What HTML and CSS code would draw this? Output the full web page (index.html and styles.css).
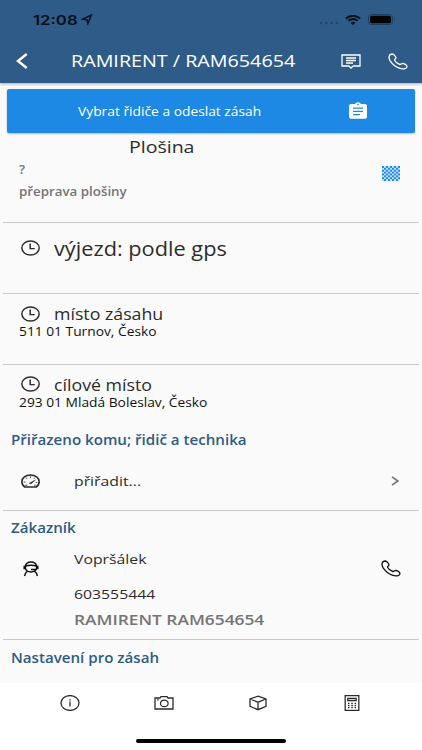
FILE: index.html
```html
<!DOCTYPE html>
<html lang="cs">
<head>
<meta charset="utf-8">
<meta name="viewport" content="width=device-width, initial-scale=1">
<title>RAMIRENT / RAM654654</title>
<link rel="stylesheet" href="styles.css">
</head>
<body>
<svg class="defs" width="0" height="0">
  <symbol id="clock" viewBox="0 0 18 16" preserveAspectRatio="none"><ellipse cx="9" cy="8" rx="8.2" ry="7"/><path d="M8.7 3.6V8.6H13"/></symbol>
  <symbol id="phone" viewBox="0 0 20 17" preserveAspectRatio="none"><path d="M1.1 3.4C1.5 2 3 1 4.3 1C5.8 1.1 7.9 3.8 8 4.8C8 6 6.2 6.2 6.6 7.3C7.3 8.8 10 11 11.8 11.5C13 11.7 13.2 10.4 14.6 10.3C16 10.4 18.8 12.1 19 13.3C19 14.5 17.5 15.8 16 15.9C9.5 16.3.2 9.2 1.1 3.4Z"/></symbol>
</svg>
<div class="screen">
  <header class="header">
    <div class="status">
      <span class="time">12:08</span>
      <svg class="location" viewBox="0 0 12 11"><path d="M1.2 5.3L10.4 1L6.8 9.8L6 5.9Z"/></svg>
      <svg class="signal" viewBox="0 0 20 4"><circle cx="2" cy="2" r="1.3"/><circle cx="7.3" cy="2" r="1.3"/><circle cx="12.6" cy="2" r="1.3"/><circle cx="17.9" cy="2" r="1.3"/></svg>
      <svg class="wifi" viewBox="0 0 16 10"><path d="M.8 3.5Q8-2 15.2 3.5M3.3 5.8Q8 2.1 12.7 5.8"/><path class="dot" d="M5.5 7.7Q8 5.9 10.5 7.7L8 9.9Z"/></svg>
      <svg class="battery" viewBox="0 0 28 11"><rect class="shell" x=".5" y=".5" width="24" height="10" rx="3"/><rect x="2" y="1.8" width="21" height="7.4" rx="1.8"/><path class="tip" d="M26 3.8Q28 5.5 26 7.2Z"/></svg>
    </div>
    <div class="toolbar">
      <svg class="back" viewBox="0 0 12 16"><path d="M10.7 1L2 8L10.7 15"/></svg>
      <h1 class="title"><span>RAMIRENT / RAM654654</span></h1>
      <svg class="chat" viewBox="0 0 20 15"><path d="M1 1H19V12H12.2L10 14L7.8 12H1ZM5 4H15M5 6.5H15M5 9H12"/></svg>
      <svg class="call"><use href="#phone"/></svg>
    </div>
  </header>
  <main class="content">
    <button class="send"><span class="send-label">Vybrat řidiče a odeslat zásah</span>
      <svg class="clipboard" viewBox="0 0 18 17"><path class="board" d="M2 2H6Q6.7.3 9 .3Q11.3.3 12 2H16Q18 2 18 3.8V15Q18 16.8 16 16.8H2Q0 16.8 0 15V3.8Q0 2 2 2Z"/><circle cx="9" cy="2.6" r=".8"/><path class="lines" d="M4 6.2H14M4 9.4H14M4 12.6H11"/></svg>
    </button>
    <section class="summary">
      <h2 class="kind"><span>Plošina</span></h2>
      <div class="detail">
        <div class="notes"><p><span>?</span></p><p><span>přeprava plošiny</span></p></div>
        <svg class="flag" viewBox="0 0 18 15"><defs><pattern id="checks" width="4" height="3.75" patternUnits="userSpaceOnUse"><path d="M0 0H2V1.875H0ZM2 1.875H4V3.75H2Z"/></pattern></defs><rect class="tint" width="18" height="15"/><rect fill="url(#checks)" width="18" height="15"/></svg>
      </div>
    </section>
    <section class="stop departure"><div class="stop-head"><svg class="clock"><use href="#clock"/></svg><span class="stop-title">výjezd: podle gps</span></div></section>
    <section class="stop"><div class="stop-head"><svg class="clock"><use href="#clock"/></svg><span class="stop-title">místo zásahu</span></div><p class="address"><span>511 01 Turnov, Česko</span></p></section>
    <section class="stop last"><div class="stop-head"><svg class="clock"><use href="#clock"/></svg><span class="stop-title">cílové místo</span></div><p class="address"><span>293 01 Mladá Boleslav, Česko</span></p></section>
    <h3 class="group assigned"><span>Přiřazeno komu; řidič a technika</span></h3>
    <section class="assign">
      <svg class="gauge" viewBox="0 0 18 13"><path d="M3.6 12.2Q.8 10.3.8 7.2C.8 3.5 4.5.8 9 .8S17.2 3.5 17.2 7.2Q17.2 10.3 14.4 12.2Z"/><path class="needle" d="M7.8 8.7L13.6 5.5L9.5 9.2Z"/><path class="ticks" d="M9 2V3.8M5 3.4L5.8 4.6M2.5 7.5H4.2M13 3.4L12.3 4.5M14 8H15.5M4 10.5H6M12.5 10.5H14"/></svg>
      <span class="assign-text">přiřadit...</span>
      <svg class="chevron" viewBox="0 0 8 10"><path d="M1 .9L6.8 5L1 9.1"/></svg>
    </section>
    <h3 class="group customer-title"><span>Zákazník</span></h3>
    <section class="customer">
      <svg class="person" viewBox="0 0 16 16"><path d="M2.4 5C3 2.4 5 1 8 1S13 2.4 13.6 5Q8 3.6 2.4 5ZM1.2 4.8V8.2M14.8 4.8V8.2M2.4 5V7.4C3 9.8 5 10.9 8 10.9S13 9.8 13.6 7.4V5M8 8.4H13M4.3 10.4Q2.2 11.6 1.6 15M11.7 10.4Q13.8 11.6 14.4 15"/></svg>
      <div class="contact"><p class="name"><span>Vopršálek</span></p><p class="number"><span>603555444</span></p><p class="company"><span>RAMIRENT RAM654654</span></p></div>
      <svg class="call"><use href="#phone"/></svg>
    </section>
    <h3 class="group settings"><span>Nastavení pro zásah</span></h3>
  </main>
  <nav class="tabs">
    <svg viewBox="0 0 20 16"><ellipse cx="10" cy="8" rx="9" ry="7.4"/><path d="M10 6.5V11.5M10 4.2V5.4"/></svg>
    <svg viewBox="0 0 20 16"><path d="M1 3H6L7 1.7H13L14 3H19V14H1ZM3.2 4.8H4.8"/><ellipse cx="10.3" cy="8.4" rx="3.8" ry="3.3"/></svg>
    <svg viewBox="0 0 20 16"><path d="M10 1.2L18 4V11.3L10 14.7L2 11.3V4ZM2 4L10 7.2L18 4M10 7.2V14.7"/></svg>
    <svg viewBox="0 0 20 16"><path d="M3.2.7H16.8V15.3H3.2ZM5.8 3.3H14.2V5.5H5.8Z"/><path class="keys" d="M6 8.3H14.3M6 10.5H14.3M6 12.7H14.3"/></svg>
  </nav>
  <div class="home"><i></i></div>
</div>
</body>
</html>
```

FILE: styles.css
```css
* { box-sizing: border-box; }
body { margin: 0; font-family: "Open Sans", "Noto Sans", sans-serif; color: #2c2c2c; background: #fafafa; }
h1, h2, h3, p { margin: 0; font-weight: 400; }
svg { display: block; flex: none; fill: none; stroke: currentColor; }
span { display: inline-block; white-space: nowrap; transform: scaleX(var(--stretch, 1.18)); transform-origin: left center; }
.defs { position: absolute; }
.screen { width: 422px; height: 750px; display: flex; flex-direction: column; overflow: hidden; }

.header { height: 83px; flex: none; background: #2e5b87; box-shadow: 0 1px 3px #0005; position: relative; }
.status { height: 39px; display: flex; align-items: center; padding-left: 33px; color: #07101b; }
.time { width: 48px; font: 600 13.5px/20px Inter, sans-serif; --stretch: 1.24; }
.location { width: 12px; height: 11px; fill: none; stroke-width: 1.4; }
.signal { width: 20px; height: 4px; margin: 7px 0 0 226px; fill: #20456a; stroke: none; }
.wifi { width: 16px; height: 10px; margin-left: 6px; stroke-width: 1.9; }
.wifi .dot { fill: currentColor; stroke: none; }
.battery { width: 28px; height: 11px; margin-left: 7px; fill: #000; stroke: none; }
.battery .shell { fill: none; stroke: #1c3d60; }
.battery .tip { fill: #1c3d60; }
.toolbar { height: 44px; display: flex; align-items: center; padding-left: 16px; color: #fff; }
.back { width: 12px; height: 16px; stroke-width: 2.4; }
.title { width: 269px; margin-left: 43px; font-size: 16.5px; line-height: 22px; }
.title span { --stretch: 1.195; }
.chat { width: 20px; height: 15px; margin-left: 1px; stroke-width: 1.3; }
.call { width: 20px; height: 17px; stroke-width: 1.3; }
.toolbar .call { margin-left: 27px; }

.content { height: 600px; flex: none; padding: 6px 3px 0; }
.send { width: 408px; height: 44px; margin: 0 4px; padding: 0 0 0 71px; display: flex; align-items: center; border: 0; border-radius: 2px; background: #1e88e5; color: #fff; font: 12px/18px "Open Sans", sans-serif; box-shadow: 0 1px 2px #0004; }
.send-label { width: 270px; padding-top: 1px; text-align: left; --stretch: 1.15; }
.clipboard { width: 18px; height: 17px; margin: 0 0 2px 1px; stroke: none; }
.clipboard .board { fill: #fff; }
.clipboard circle { fill: #1e88e5; }
.clipboard .lines { stroke: #1e88e5; stroke-width: 1.3; }

.summary { height: 90px; border-bottom: 1px solid #c8c9cc; }
.kind { padding: 3px 0 0 126px; font-size: 16px; line-height: 22px; --stretch: 1.22; }
.detail { display: flex; justify-content: space-between; padding: 0 19px 0 16px; }
.notes { padding-top: 1px; color: #757575; font-size: 12px; line-height: 22px; --stretch: 1.11; }
.notes p { font-weight: 600; }
.flag { width: 18px; height: 15px; margin-top: 8px; fill: #1e88e5; stroke: none; }
.flag .tint { fill: #c3e0fa; }

.stop { height: 71px; padding: 9px 16px 0 18px; border-bottom: 1px solid #c8c9cc; }
.stop-head { display: flex; align-items: center; height: 21px; }
.clock { width: 19px; height: 16px; margin-right: 14px; stroke-width: 1.4; }
.stop-title { padding-top: 1px; font-size: 15.5px; line-height: 21px; --stretch: 1.145; }
.departure .stop-head { height: 31px; }
.departure .stop-title { padding-top: 3px; font-size: 19.5px; line-height: 30px; --stretch: 1.115; }
.address { margin-left: -2px; font-size: 12px; line-height: 16px; color: #111; --stretch: 1.148; }
.last { height: 62px; border: 0; }
.last .clock { margin-bottom: 2px; }
.group { padding-left: 8px; font-size: 13.5px; line-height: 20px; color: #2e5b87; font-weight: 600; --stretch: 1.12; }
.assigned { margin-top: 3px; }
.assign { height: 61px; display: flex; align-items: center; padding: 2px 20px 0 18px; border-bottom: 1px solid #c8c9cc; }
.gauge { width: 19px; height: 14px; stroke-width: 1.5; }
.gauge .needle { fill: currentColor; stroke-width: .5; }
.gauge .ticks { stroke-width: .8; }
.assign-text, .name, .number { font-size: 13.5px; line-height: 20px; --stretch: 1.17; }
.assign-text { margin-left: 34px; }
.chevron { width: 8px; height: 10px; margin-left: auto; color: #777; stroke-width: 1.6; }
.customer-title { margin-top: 7px; }
.customer { height: 102px; display: flex; padding: 0 18px 0 20px; border-bottom: 1px solid #c8c9cc; }
.person { width: 16px; height: 16px; margin-top: 23px; stroke-width: 1.5; color: #111; }
.contact { margin-left: 35px; padding-top: 11px; }
.number { padding-top: 15px; }
.company { padding-top: 4px; font-size: 15px; line-height: 22px; font-weight: 600; color: #757575; --stretch: 1.155; }
.customer .call { margin: 22px 0 0 auto; color: #111; }
.settings { margin-top: 8px; }
.tabs { height: 40px; flex: none; display: flex; justify-content: space-around; align-items: center; padding: 0 23px; background: #fff; }
.tabs svg { width: 20px; height: 16px; stroke-width: 1.3; }
.tabs .keys { stroke-dasharray: 1.5 1.8; }
.home { height: 27px; background: #fff; padding-top: 16px; }
.home i { display: block; width: 150px; height: 4px; margin: 0 auto; border-radius: 2px; background: #000; }
```
